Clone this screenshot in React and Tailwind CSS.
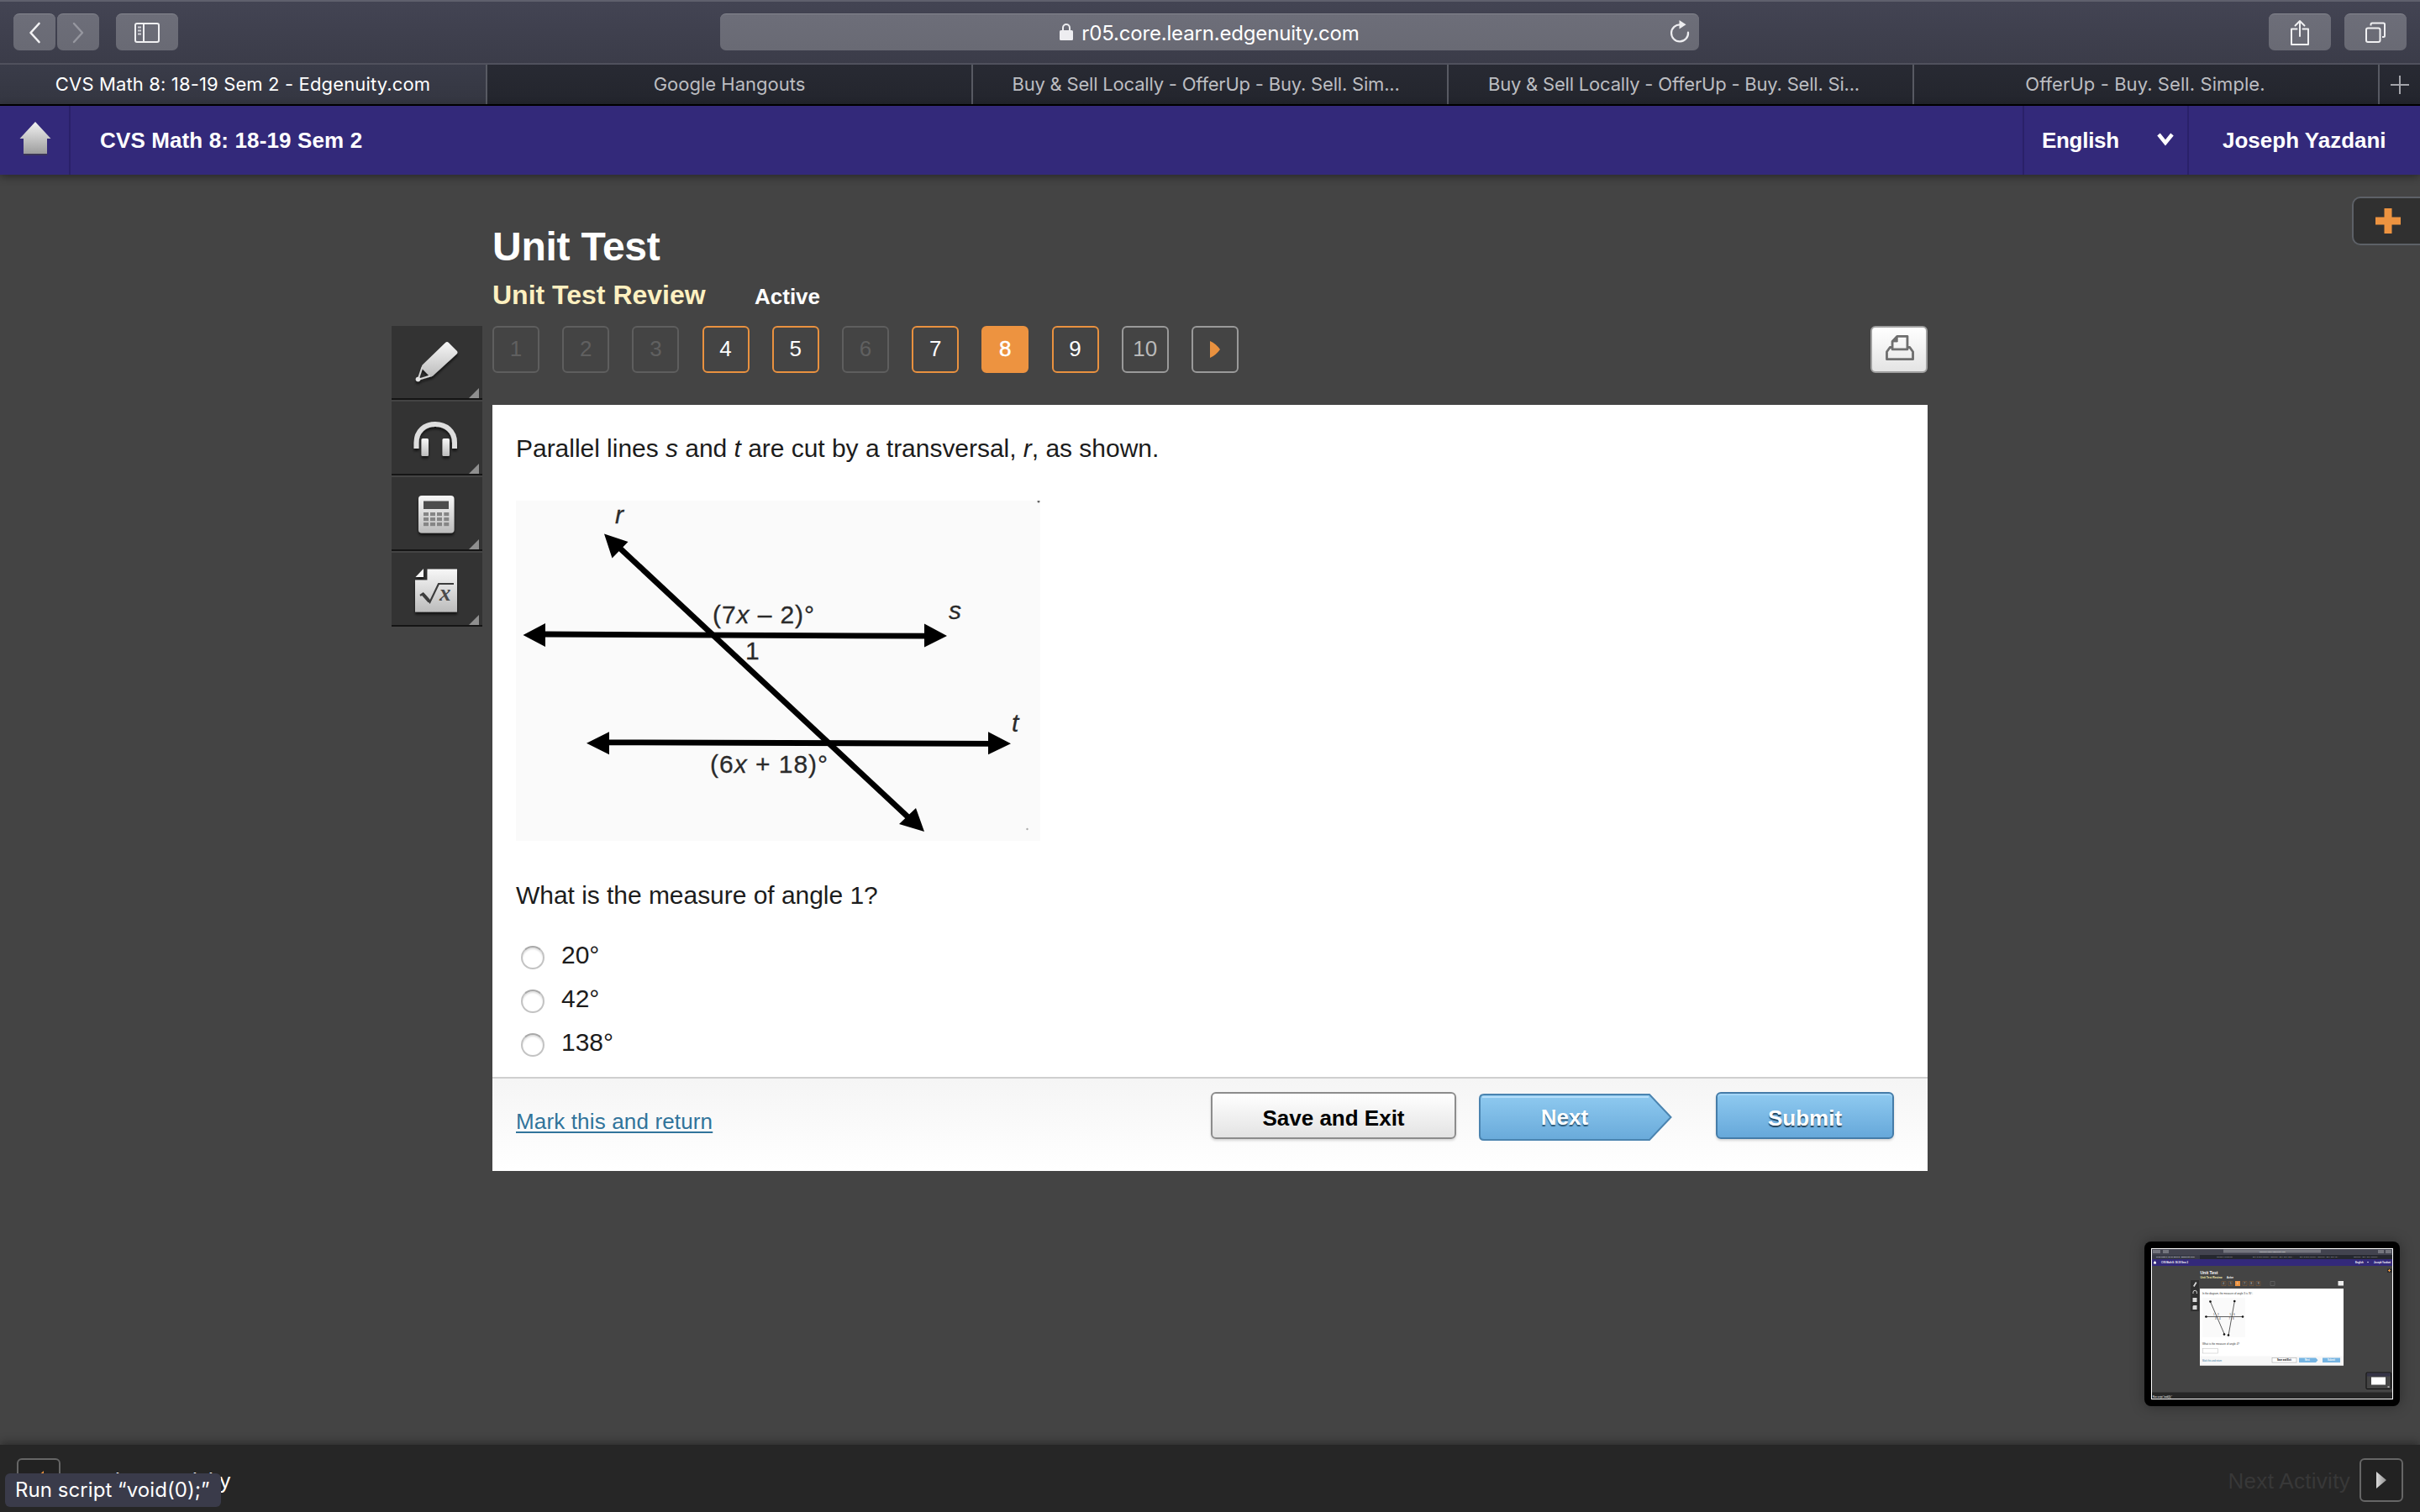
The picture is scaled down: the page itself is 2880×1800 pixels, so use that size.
const tabs = [
  { title: 'CVS Math 8: 18-19 Sem 2 - Edgenuity.com', size: 'w-[580px] tracking-[0.14px]', active: true },
  { title: 'Google Hangouts', size: 'w-[578px]' },
  { title: 'Buy & Sell Locally - OfferUp - Buy. Sell. Sim...', size: 'w-[566px] pr-2.5 tracking-[-0.2px]' },
  { title: 'Buy & Sell Locally - OfferUp - Buy. Sell. Si...', size: 'w-[554px] pr-4 tracking-[-0.2px]' },
  { title: 'OfferUp - Buy. Sell. Simple.', size: 'w-[554px] pr-0.5 tracking-[0.08px]' },
]

const questions = [
  { n: 1, state: 'locked' },
  { n: 2, state: 'locked' },
  { n: 3, state: 'locked' },
  { n: 4, state: 'answered' },
  { n: 5, state: 'answered' },
  { n: 6, state: 'locked' },
  { n: 7, state: 'answered' },
  { n: 8, state: 'current' },
  { n: 9, state: 'answered' },
  { n: 10, state: 'open' },
]

const questionStyles = {
  locked: 'border-[#5e5e5e] text-[#606060]',
  answered: 'border-[#e9913f] text-white',
  current: 'border-[#ed9340] bg-[#ed9340] text-white [-webkit-text-stroke:0.5px_#fff]',
  open: 'border-[#9a9a9a] text-[#b9b9b9]',
}

const choices = ['20°', '42°', '138°']

function ToolbarButton({ className, children }) {
  return (
    <button
      className={`h-11 flex items-center justify-center rounded-[7px] border-t border-[#85868f]
                  bg-gradient-to-b from-[#6d6e79] to-[#696a74] ${className}`}
    >
      {children}
    </button>
  )
}

function BrowserToolbar() {
  return (
    <div className="h-[75px] shrink-0 flex items-start justify-between pl-4 pr-4 pt-3.5
                    border-t-2 border-[#5f606d] bg-gradient-to-b from-[#434453] to-[#3b3c49]">
      <div className="w-[841px] flex">
        <ToolbarButton className="w-[50px]">
          <svg width="16" height="26" viewBox="0 0 16 26" fill="none" stroke="#f2f2f4" strokeWidth="2.6" strokeLinecap="round" strokeLinejoin="round">
            <path d="M13.500 2 3.500 13l10 11" />
          </svg>
        </ToolbarButton>
        <ToolbarButton className="w-[50px] ml-0.5">
          <svg width="16" height="26" viewBox="0 0 16 26" fill="none" stroke="#96979f" strokeWidth="2.4" strokeLinecap="round" strokeLinejoin="round">
            <path d="m3 2 10 11L3 24" />
          </svg>
        </ToolbarButton>
        <ToolbarButton className="w-[74px] ml-5">
          <svg width="32" height="26" viewBox="0 0 32 26" fill="none" stroke="#f0f0f2" strokeWidth="2">
            <rect x="2" y="2" width="28" height="22" rx="2" />
            <path d="M12 2v22" />
            <path d="M5 6.500h4M5 10.500h4M5 14.500h4" strokeWidth="1.800" stroke="#d0d0d6" />
          </svg>
        </ToolbarButton>
      </div>

      {/* Address bar */}
      <div className="relative w-[1165px] h-11 flex items-center justify-center rounded-[7px] border-t border-[#85868f]
                      bg-gradient-to-b from-[#6d6e79] to-[#696a74] font-['Inter',sans-serif]">
        <svg className="mr-2.5 -mt-0.5" width="16" height="22" viewBox="0 0 16 22">
          <path d="M4 10V6a4 4 0 0 1 8 0v4" fill="none" stroke="#ededf0" strokeWidth="2" />
          <rect x="0" y="9" width="16" height="12" rx="1.500" fill="#ededf0" />
        </svg>
        <span className="pt-0.5 text-[24px] leading-8 tracking-[-0.17px] text-white">r05.core.learn.edgenuity.com</span>
        <svg className="absolute right-[10px] top-[7px]" width="26" height="28" viewBox="0 0 26 28">
          <path d="M14 5.500a10 10 0 1 0 9 9" fill="none" stroke="#ededf0" strokeWidth="2.200" strokeLinecap="round" />
          <path d="M12.500 0v10.500l8-5.200z" fill="#ededf0" />
        </svg>
      </div>

      <div className="w-[842px] flex justify-end gap-4">
        <ToolbarButton className="w-[74px]">
          <svg width="28" height="32" viewBox="0 0 28 32" fill="none" stroke="#f0f0f2" strokeWidth="2" strokeLinecap="round" strokeLinejoin="round">
            <path d="M10.500 11.500H4V30h20V11.500h-6.500" />
            <path d="M14 20V2.500M8.500 7.500 14 2l5.500 5.500" />
          </svg>
        </ToolbarButton>
        <ToolbarButton className="w-[74px]">
          <svg width="26" height="26" viewBox="0 0 26 26" fill="none" stroke="#f0f0f2" strokeWidth="2" strokeLinejoin="round">
            <rect x="2" y="7.500" width="16.500" height="16.500" rx="2" />
            <path d="M7.500 4.500V3a1.500 1.500 0 0 1 1.500-1.500h13.500A1.500 1.500 0 0 1 24 3v13.500a1.500 1.500 0 0 1-1.500 1.500H21" />
          </svg>
        </ToolbarButton>
      </div>
    </div>
  )
}

function TabBar() {
  return (
    <div className="h-[51px] shrink-0 flex border-t-2 border-t-[#50515d] border-b-2 border-b-black
                    bg-gradient-to-b from-[#282a33] to-[#23252d] font-['Inter',sans-serif] text-[22px] leading-[46px] text-[#bcbdc1]">
      {tabs.map((tab, i) => (
        <div
          key={i}
          className={`shrink-0 text-center whitespace-nowrap border-r-2 border-[#585a63] ${tab.size} ${
            tab.active ? 'bg-gradient-to-b from-[#3a3c49] to-[#343641] text-white' : ''
          }`}
        >
          {tab.title}
        </div>
      ))}
      <div className="flex-1 flex items-center justify-center">
        <svg width="22" height="22" viewBox="0 0 22 22" stroke="#a3a4aa" strokeWidth="2">
          <path d="M11 0v22M0 11h22" />
        </svg>
      </div>
    </div>
  )
}

function CourseHeader() {
  return (
    <header className="relative z-10 h-[82px] shrink-0 flex bg-[#33297a] text-white text-[26px] font-bold leading-[82px]
                       shadow-[0_2px_10px_rgba(0,0,0,0.45)]">
      <div className="w-[84px] pl-0.5 flex items-center justify-center border-r-2 border-[#2a2169]">
        <svg className="-mt-1" width="38" height="42" viewBox="0 0 38 42">
          <defs>
            <linearGradient id="home" x1="0" y1="0" x2="0" y2="1">
              <stop offset="0" stopColor="#f2f2f2" />
              <stop offset="1" stopColor="#9c9c9c" />
            </linearGradient>
          </defs>
          <path d="M19 1 .5 21H5v18.500h28V21h4.500z" fill="url(#home)" />
          <path d="M5 40h28" stroke="#3b3558" strokeWidth="2" />
        </svg>
      </div>
      <h1 className="flex-1 pl-[35px] tracking-[0.13px]">CVS Math 8: 18-19 Sem 2</h1>
      <div className="w-[196px] flex items-center justify-between pl-[21px] pr-4 border-l-2 border-[#2a2169]">
        <span className="tracking-[-0.3px]">English</span>
        <svg className="-mt-0.5" width="20" height="16" viewBox="0 0 20 16" fill="none" stroke="#fff" strokeWidth="4.500">
          <path d="m2 2 8 10 8-10" />
        </svg>
      </div>
      <div className="w-[277px] pl-10 whitespace-nowrap border-l-2 border-[#2a2169]">Joseph Yazdani</div>
    </header>
  )
}

function ToolTile({ children }) {
  return (
    <button className="block h-[88px] mb-0.5 bg-[#333] border-b-2 border-[#151515]">
      <svg width="108" height="86" viewBox="0 0 108 86">
        {children}
        <path d="M104 74v12H92z" fill="#8f8f8f" />
      </svg>
    </button>
  )
}

function Toolbox() {
  return (
    <aside className="w-[108px] mt-[180px] flex flex-col">
      <svg className="absolute" width="0" height="0">
        <defs>
          <linearGradient id="metal" x1="0" y1="0" x2="0" y2="1">
            <stop offset="0" stopColor="#f7f7f7" />
            <stop offset="1" stopColor="#bcbcbc" />
          </linearGradient>
          <filter id="drop" x="-20%" y="-20%" width="140%" height="150%">
            <feDropShadow dx="0" dy="3" stdDeviation="1.5" floodColor="#000" floodOpacity="0.6" />
          </filter>
        </defs>
      </svg>

      {/* Highlighter */}
      <ToolTile>
        <g filter="url(#drop)">
          <path d="M64 20q2-2 4 0l9.500 9.500q2 2 0 4L49 59.500q-1.500 1.200-3.500.8L36 50.500q-.7-2 .6-4z" fill="url(#metal)" />
          <path d="M36.500 49 31.500 64l14.500-4.500" fill="none" stroke="#d6d6d6" strokeWidth="2" />
          <circle cx="31.500" cy="63.500" r="2.800" fill="#e4e4e4" />
        </g>
      </ToolTile>

      {/* Read aloud */}
      <ToolTile>
        <g filter="url(#drop)">
          <path d="M29.500 56v-7C29.500 35 39.500 27 52 27s23 8 23 22v7" fill="none" stroke="#dedede" strokeWidth="6" />
          <rect x="35.500" y="44" width="8.500" height="21" rx="1.500" fill="url(#metal)" />
          <rect x="60.500" y="44" width="8.500" height="21" rx="1.500" fill="url(#metal)" />
        </g>
      </ToolTile>

      {/* Calculator */}
      <ToolTile>
        <rect x="32" y="22" width="42.500" height="44.500" rx="4" fill="url(#metal)" filter="url(#drop)" />
        <rect x="38" y="28.500" width="30" height="9.500" fill="#4c4c4c" />
        {[42, 48, 54].map((y) =>
          [38, 46, 54, 62.3].map((x) => <rect key={`${x}-${y}`} x={x} y={y} width="6" height="4.200" fill="#858585" />)
        )}
      </ToolTile>

      {/* Formula sheet */}
      <ToolTile>
        <g filter="url(#drop)">
          <path d="M42.500 19.500H78v51H28V32.500h14.500z" fill="url(#metal)" />
          <path d="M38 19v10H28.500z" fill="#f7f7f7" />
        </g>
        <path d="m34 51 3.500-2.500 8 10.500L56 37h18" fill="none" stroke="#3c3c3c" strokeWidth="2.200" />
        <path d="m37 49 8 9" stroke="#3c3c3c" strokeWidth="4" />
        <text x="57" y="57" fontFamily="Liberation Serif, serif" fontSize="27" fontStyle="italic" fontWeight="bold" fill="#4a4a4a">x</text>
      </ToolTile>
    </aside>
  )
}

function QuestionNav() {
  return (
    <nav className="mt-[17px] h-14 flex text-[26px] leading-[51px] text-center">
      <div className="flex-1 flex gap-[27.2px]">
        {questions.map((q) => (
          <div key={q.n} className={`w-14 h-14 rounded-md border-2 ${questionStyles[q.state]}`}>
            {q.n}
          </div>
        ))}
        <div className="w-14 h-14 flex items-center justify-center rounded-md border-2 border-[#9a9a9a]">
          <svg width="12" height="20" viewBox="0 0 12 20">
            <path d="M0 0v20q7-3 12-10Q7 3 0 0z" fill="#e9913f" />
          </svg>
        </div>
      </div>
      <button className="w-[68px] h-14 flex items-center justify-center rounded-md border-2 border-[#a0a0a0]
                         bg-gradient-to-b from-white to-[#e4e4e4]">
        <svg className="ml-0.5 -mt-1" width="36" height="32" viewBox="0 0 38 34" fill="none" stroke="#6e6e6e" strokeWidth="3" strokeLinejoin="round">
          <path d="M9.500 16.500H6.500L2.500 22v9.500h33V22l-4-5.500h-3" />
          <path d="M15.500 2.500h13V19h-19V9z" />
          <path d="M16 3v6.500H9.500z" fill="#6e6e6e" strokeWidth="1" />
        </svg>
      </button>
    </nav>
  )
}

function Diagram() {
  return (
    <svg className="block mt-11 shrink-0" width="624" height="405" viewBox="0 0 624 405">
      <rect width="624" height="405" fill="#fafafa" />
      <g stroke="#000" strokeWidth="6.800">
        <path d="m30 159 460 2.200" />
        <path d="m106 287.800 460 1.500" />
        <path d="m122 55 346 323" />
      </g>
      <path d="m8.500 160 26.500-14v28zM513 161l-27-14.500v28zM84 288.700l27-13.500v27zM589 289.300l-27-14v27z" />
      <path d="m105 39.500 28.500 9.500-19 19.500zM486 394l-10-28-20 19z" />
      <g fontFamily="'Liberation Sans', Arial, sans-serif" fontSize="30" fill="#2b2b2b" stroke="#2b2b2b" strokeWidth="0.3">
        <text x="118" y="27" fontStyle="italic">r</text>
        <text x="515" y="141" fontStyle="italic">s</text>
        <text x="590" y="275" fontStyle="italic">t</text>
        <text x="234" y="146" textLength="121">
          (7<tspan fontStyle="italic">x</tspan> – 2)°
        </text>
        <text x="273" y="189">1</text>
        <text x="231" y="323.500" textLength="140">
          (6<tspan fontStyle="italic">x</tspan> + 18)°
        </text>
      </g>
      <circle cx="622" cy="1" r="1.500" fill="#666" />
      <circle cx="608.500" cy="391" r="1.200" fill="#aaa" />
    </svg>
  )
}

function QuestionPanel() {
  return (
    <section className="mt-[38px] h-[912px] flex flex-col bg-white text-[#1c1c1c]">
      <div className="flex-1 flex flex-col pl-7 pt-[34px] text-[30px] leading-9">
        <p className="tracking-[-0.03px]">
          Parallel lines <i>s</i> and <i>t</i> are cut by a transversal, <i>r</i>, as shown.
        </p>
        <Diagram />
        <p className="mt-[47px] tracking-[-0.04px]">What is the measure of angle 1?</p>
        <div className="mt-[30px]">
          {choices.map((choice) => (
            <label key={choice} className="h-[52px] flex items-center pl-1.5">
              <span className="w-7 h-7 rounded-full border-2 border-[#c3c3c3] border-t-[#a9a9a9] bg-white
                               shadow-[inset_0_2px_2px_rgba(0,0,0,0.12)]" />
              <span className="ml-5 pb-1.5">{choice}</span>
            </label>
          ))}
        </div>
      </div>

      {/* Footer actions */}
      <div className="h-28 flex items-start border-t-2 border-[#cfcfcf] bg-gradient-to-b from-[#f5f5f5] to-white
                      pl-7 pr-10 pt-4 text-[26px] leading-8">
        <a className="mt-[13px] mr-auto pt-1.5 text-[#31749b] tracking-[0.15px] underline decoration-2 underline-offset-[3px]">
          Mark this and return
        </a>
        <button className="w-[292px] h-14 rounded-md border-2 border-[#8c8c8c] bg-gradient-to-b from-white to-[#e3e3e3]
                           font-bold text-black shadow-[0_2px_3px_rgba(0,0,0,0.15)]">
          <span className="block h-[52px] leading-[58px]">Save and Exit</span>
        </button>
        <button className="relative w-[230px] h-14 mt-0.5 ml-[27px] font-bold text-white">
          <svg className="absolute inset-0" width="230" height="56" viewBox="0 0 230 56">
            <defs>
              <linearGradient id="blue" x1="0" y1="0" x2="0" y2="1">
                <stop offset="0" stopColor="#8fcaf0" />
                <stop offset="1" stopColor="#69aada" />
              </linearGradient>
            </defs>
            <path d="M6 1h197l25.500 27L203 55H6q-5 0-5-5V6q0-5 5-5z" fill="url(#blue)" stroke="#4b84b0" strokeWidth="2" />
            <path d="M4 4h198" stroke="#b5defa" strokeWidth="2" />
          </svg>
          <span className="relative block pr-[26px] leading-[57px] [text-shadow:0_2px_1px_#2b5878]">Next</span>
        </button>
        <button className="w-[212px] h-14 ml-[52px] rounded-md border-2 border-[#457ca8] bg-gradient-to-b from-[#8fcaf0] to-[#66a8da]
                           font-bold text-white shadow-[inset_0_2px_0_#a5d6f7,0_2px_3px_rgba(0,0,0,0.15)]">
          <span className="block h-[52px] leading-[58px] [text-shadow:0_2px_1px_#24445c]">Submit</span>
        </button>
      </div>
    </section>
  )
}

// Floating preview of the last screen capture
function CaptureThumbnail() {
  return (
    <div className="absolute left-[2552px] top-[1478px] w-[304px] h-[196px] rounded-lg bg-black p-2 shadow-[0_0_16px_rgba(0,0,0,0.35)]">
      <svg width="288" height="180" viewBox="0 0 288 180" fontFamily="'Liberation Sans', Arial, sans-serif">
        <rect width="288" height="180" fill="#444" />
        <rect width="288" height="8" fill="#42434f" />
        <rect y="8" width="288" height="5" fill="#25272f" />
        <rect y="8" width="58" height="5" fill="#383a46" />
        <rect y="13" width="288" height="8" fill="#33297a" />
        <g fill="#74757e">
          <path d="M2 2h9v4H2zM14 2h7v4h-7zM86 1.500h116v4H86zM270 2h7v4h-7zM279 2h7v4h-7z" />
        </g>
        <g fontSize="2.400" fill="#b5b5b5">
          <text x="129" y="4.800" fill="#fff">r05.core.learn.edgenuity.com</text>
          <text x="6" y="11.200" fill="#fff">CVS Math 8: 18-19 Sem 2 - Edgenuity.com</text>
          <text x="78" y="11.200">Google Hangouts</text>
          <text x="121" y="11.200">Buy &amp; Sell Locally - OfferUp - Buy. Sell. Sim...</text>
          <text x="177" y="11.200">Buy &amp; Sell Locally - OfferUp - Buy. Sell. Si...</text>
          <text x="241" y="11.200">OfferUp - Buy. Sell. Simple.</text>
        </g>
        <g fontSize="2.700" fontWeight="bold" fill="#fff">
          <text x="12" y="17.800">CVS Math 8: 18-19 Sem 2</text>
          <text x="243" y="17.800">English</text>
          <text x="265" y="17.800">Joseph Yazdani</text>
          <text x="58.500" y="31" fontSize="5">Unit Test</text>
          <text x="58.500" y="36.300" fontSize="3.300" fill="#f6ecae">Unit Test Review</text>
          <text x="90" y="36.300">Active</text>
        </g>
        <path d="m3 17 1.500-2L6 17v1.500H3zM257 16h2l-1 1.500z" fill="#fff" />
        <path d="M281 24.500h7v4.500h-7z" fill="#2d2d2d" />
        <path d="M283.500 25v3M282 26.500h3" stroke="#ed9340" />
        <rect x="47" y="38" width="10" height="37" fill="#303030" />
        <path d="m50 45 3-5 1.500 1-3 5zM49.500 64v-5h5v5zM49.500 73v-4l1-1h4v5z" fill="#d8d8d8" />
        <path d="M50 54v-1.500a2.200 2.200 0 0 1 4.400 0V54" fill="none" stroke="#d8d8d8" />
        <g fill="none" stroke="#8a5f37" strokeWidth="0.500">
          <path d="M84 39.500h5v5h-5zM92 39.500h5v5h-5zM109 39.500h5v5h-5zM117 39.500h5v5h-5zM125 39.500h5v5h-5z" />
          <path d="M142 39.500h5v5h-5z" stroke="#777" />
        </g>
        <rect x="100" y="39" width="6" height="6" fill="#ed9340" />
        <g fontSize="2.700" fill="#ddd">
          <text x="85.500" y="42.800">4</text>
          <text x="94" y="42.800">5</text>
          <text x="102.200" y="42.800">6</text>
          <text x="110.500" y="42.800">7</text>
          <text x="118.500" y="42.800">8</text>
          <text x="127" y="42.800">9</text>
        </g>
        <rect x="222.500" y="39" width="6.500" height="5.500" fill="#eee" />
        <rect x="58" y="48" width="171" height="91.500" fill="#fff" />
        <rect x="61" y="59" width="51" height="47" fill="#fafafa" />
        <g stroke="#333" strokeWidth="0.800">
          <path d="M64 81.500h46M70 62.500l17.500 40.500M99.500 62 92 104" />
        </g>
        <g fill="#111">
          <circle cx="65.500" cy="81.500" r="1.300" />
          <circle cx="109" cy="81.500" r="1.300" />
          <circle cx="70.500" cy="63.500" r="1.300" />
          <circle cx="87" cy="102.500" r="1.300" />
          <circle cx="99.300" cy="63" r="1.300" />
          <circle cx="92" cy="103.500" r="1.300" />
        </g>
        <g fontSize="3" fill="#333">
          <text x="61" y="54.500" textLength="60">In the diagram, the measure of angle 3 is 76°.</text>
          <text x="61" y="114.500" textLength="44">What is the measure of angle 4?</text>
          <text x="74" y="80">1</text>
          <text x="79" y="80">2</text>
          <text x="76" y="85">3</text>
          <text x="81" y="85">4</text>
          <text x="93.500" y="80">5</text>
          <text x="98" y="80">6</text>
          <text x="92.500" y="85">7</text>
          <text x="97" y="85">8</text>
        </g>
        <rect x="61.500" y="119.500" width="18" height="5.500" fill="#fff" stroke="#bbb" strokeWidth="0.500" />
        <rect x="58" y="128.500" width="171" height="11" fill="#f7f7f7" />
        <text x="61" y="134.600" fontSize="2.600" fill="#31749b">Mark this and return</text>
        <rect x="144" y="130.500" width="29" height="5.500" fill="#fff" stroke="#999" strokeWidth="0.500" />
        <path d="M176 130.500h20l2.500 2.700-2.500 2.800h-20zM204 130.500h21v5.500h-21z" fill="#75b4e2" />
        <g fontSize="2.600" fontWeight="bold">
          <text x="150" y="134.300">Save and Exit</text>
          <text x="183" y="134.300" fill="#fff">Next</text>
          <text x="210" y="134.300" fill="#fff">Submit</text>
        </g>
        <rect x="256" y="148" width="29.500" height="19.500" rx="1" fill="#454545" stroke="#0c0c0c" />
        <path d="M257 148.500h27.500v4H257z" fill="#353446" />
        <path d="M262 153.500h17v9h-17zM281.500 164.500h2v1h-2z" fill="#fff" />
        <rect y="171.500" width="288" height="8.500" fill="#262626" />
        <text x="2" y="178.200" fontSize="2.600" fill="#fff">Run script “void(0);”</text>
        <rect x="0.500" y="0.500" width="287" height="179" fill="none" stroke="#fff" />
      </svg>
    </div>
  )
}

function ActivityBar() {
  return (
    <footer className="relative h-20 shrink-0 flex items-start justify-between px-5 pt-4 bg-[#262626] text-[26px] leading-[54px]
                       shadow-[0_-3px_10px_rgba(0,0,0,0.35)]">
      <div className="flex text-white">
        <div className="w-[52px] h-[52px] mr-[11px] flex items-center justify-center rounded-md border-2 border-[#666] bg-[#222]">
          <svg width="12" height="22" viewBox="0 0 12 22">
            <path d="M12 0v22L0 11z" fill="#ed9340" />
          </svg>
        </div>
        <span className="tracking-[0.12px]">Previous Activity</span>
      </div>
      <div className="flex text-[#383838]">
        <span className="tracking-[0.3px]">Next Activity</span>
        <div className="w-[52px] h-[52px] ml-[11px] flex items-center justify-center rounded-md border-2 border-[#666] bg-[#222]">
          <svg width="12" height="20" viewBox="0 0 12 20">
            <defs>
              <linearGradient id="next" x1="0" y1="0" x2="1" y2="0">
                <stop offset="0" stopColor="#dcdcdc" />
                <stop offset="1" stopColor="#8e8e8e" />
              </linearGradient>
            </defs>
            <path d="M0 0v20L12 10z" fill="url(#next)" />
          </svg>
        </div>
      </div>

      {/* Browser status bubble */}
      <div className="absolute left-1.5 top-[34px] w-[257px] h-10 pl-3 rounded-md bg-[#3a3b4a] font-['Inter',sans-serif]
                      text-[24px] leading-10 tracking-[0.06px] text-white whitespace-nowrap">
        Run script “void(0);”
      </div>
    </footer>
  )
}

export default function App() {
  return (
    <div className="relative w-[2880px] h-[1800px] flex flex-col overflow-hidden bg-[#444] font-['Liberation_Sans',Arial,sans-serif]">
      <BrowserToolbar />
      <TabBar />
      <CourseHeader />

      <main className="flex-1 flex gap-3 pl-[466px]">
        <Toolbox />
        <div className="w-[1708px] pt-[58px]">
          <h2 className="text-[48px] leading-[56px] tracking-[-0.25px] font-bold text-white">Unit Test</h2>
          <div className="mt-[9px] flex font-bold leading-10">
            <h3 className="w-[312px] text-[32px] text-[#fdf0c0]">Unit Test Review</h3>
            <span className="text-[26px] leading-[44px] h-10 text-white">Active</span>
          </div>
          <QuestionNav />
          <QuestionPanel />
        </div>
      </main>

      {/* Slide-out drawer handle */}
      <button className="absolute left-[2799px] top-[234px] w-[90px] h-[58px] pl-[26px] rounded-[10px] border-2 border-[#5d6167] bg-[#303030]">
        <svg width="30" height="30" viewBox="0 0 30 30">
          <path d="M10.500 0h9v10.500H30v9H19.500V30h-9V19.500H0v-9h10.500z" fill="#ed9340" />
        </svg>
      </button>

      <ActivityBar />
      <CaptureThumbnail />
    </div>
  )
}
